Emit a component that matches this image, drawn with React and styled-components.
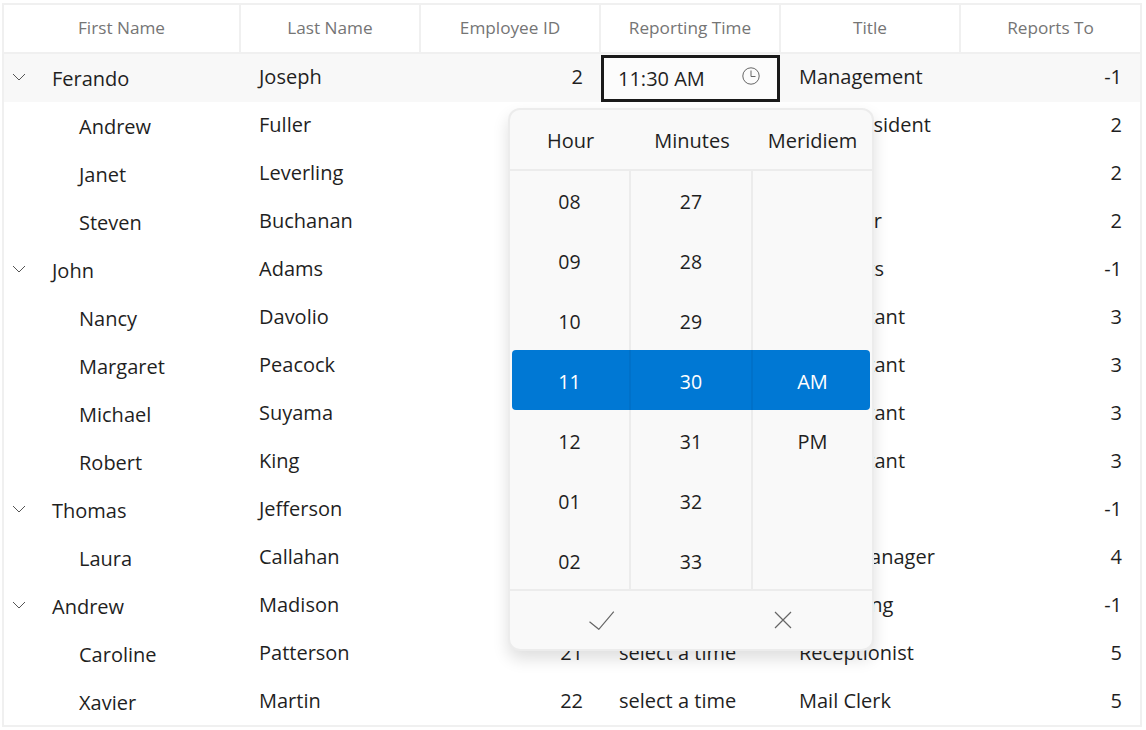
import React from "react";
import styled, { createGlobalStyle } from "styled-components";

const Global = createGlobalStyle`
  html, body {
    margin: 0;
    background: #fff;
    font-family: "Open Sans", "Noto Sans", sans-serif;
    color: #1f1f1f;
  }
`;

const Page = styled.div`
  position: relative;
  width: 1146px;
  height: 730px;
  padding: 3px 2px;
  box-sizing: border-box;
  overflow: hidden;
`;

const Grid = styled.div`
  width: 1140px;
  height: 724px;
  box-sizing: border-box;
  border: 2px solid #f0f0f0;
  overflow: hidden;
`;

const Columns = styled.div`
  display: grid;
  grid-template-columns: 237px repeat(4, 180px) 179px;
`;

const HeaderRow = styled(Columns)`
  height: 47px;
  border-bottom: 2px solid #f0f0f0;
`;

const HeaderCell = styled.div`
  display: flex;
  align-items: center;
  justify-content: center;
  font-size: 17.2px;
  color: #757575;
  border-right: ${(p) => (p.$last ? "none" : "2px solid #f0f0f0")};
  padding-bottom: 3px;
`;

const Row = styled(Columns)`
  height: 48px;
  background: ${(p) => (p.$active ? "#f8f8f8" : "#fff")};
`;

const Cell = styled.div`
  display: flex;
  align-items: center;
  box-sizing: border-box;
  height: 48px;
  font-size: 20px;
  white-space: nowrap;
  padding: 0 18px 4px 18px;
  justify-content: ${(p) => (p.$end ? "flex-end" : "flex-start")};
`;

const NameCell = styled(Cell)`
  padding-bottom: 0;
  padding-left: ${(p) => (p.$parent ? 8 : 75)}px;
`;

const Expander = styled.svg`
  width: 14px;
  height: 8px;
  margin-right: 26px;
  margin-bottom: 2px;
  flex: none;
`;

const EditCell = styled.div`
  display: flex;
  align-items: center;
  justify-content: space-between;
  box-sizing: border-box;
  height: 47px;
  margin-top: 1px;
  width: 179px;
  border: 3px solid #1a1a1a;
  background: #fcfcfc;
  padding: 0 16px 0 14px;
  font-size: 20px;
`;

const ClockIcon = styled.svg`
  width: 20px;
  height: 20px;
  margin-bottom: 5px;
`;

const Popup = styled.div`
  position: absolute;
  left: 508px;
  top: 108px;
  width: 366px;
  height: 543px;
  box-sizing: border-box;
  display: flex;
  flex-direction: column;
  border: 2px solid #ececec;
  border-radius: 12px;
  background: #f9f9f9;
  box-shadow: 0 8px 16px rgba(0, 0, 0, 0.13);
  overflow: hidden;
`;

const PopupHead = styled.div`
  display: grid;
  grid-template-columns: 121px 122px 119px;
  height: 61px;
  box-sizing: border-box;
  border-bottom: 2px solid #ececec;
`;

const HeadLabel = styled.div`
  display: flex;
  align-items: center;
  justify-content: center;
  font-size: 20px;
  padding-top: 1px;
`;

const Wheels = styled.div`
  position: relative;
  display: grid;
  grid-template-columns: 121px 122px 119px;
  height: 418px;
  flex: none;
  overflow: hidden;
`;

const Band = styled.div`
  position: absolute;
  left: 2px;
  right: 2px;
  top: 179px;
  height: 60px;
  border-radius: 4px;
  background: #0078d4;
`;

const Wheel = styled.div`
  position: relative;
  box-sizing: border-box;
  border-right: ${(p) => (p.$last ? "none" : "2px solid rgba(0, 0, 0, 0.05)")};
`;

const WheelItem = styled.div`
  display: flex;
  align-items: center;
  justify-content: center;
  height: 60px;
  font-size: ${(p) => (p.$word ? 20 : 19.5)}px;
  color: ${(p) => (p.$selected ? "#fff" : "#1f1f1f")};
`;

const PopupFoot = styled.div`
  display: grid;
  grid-template-columns: 183px 179px;
  flex: 1;
  border-top: 2px solid #ececec;
`;

const FootButton = styled.div`
  display: flex;
  align-items: center;
  justify-content: center;
`;

const rows = [
  ["Ferando", "Joseph", 2, "11:30 AM", "Management", -1, true],
  ["Andrew", "Fuller", 3, "select a time", "Vice President", 2],
  ["Janet", "Leverling", 4, "select a time", "GM", 2],
  ["Steven", "Buchanan", 18, "select a time", "Designer", 2],
  ["John", "Adams", 5, "select a time", "Accounts", -1, true],
  ["Nancy", "Davolio", 6, "select a time", "Accountant", 3],
  ["Margaret", "Peacock", 7, "select a time", "Accountant", 3],
  ["Michael", "Suyama", 8, "select a time", "Accountant", 3],
  ["Robert", "King", 9, "select a time", "Accountant", 3],
  ["Thomas", "Jefferson", 10, "select a time", "CFO", -1, true],
  ["Laura", "Callahan", 11, "select a time", "Sales Manager", 4],
  ["Andrew", "Madison", 20, "select a time", "Marketing", -1, true],
  ["Caroline", "Patterson", 21, "select a time", "Receptionist", 5],
  ["Xavier", "Martin", 22, "select a time", "Mail Clerk", 5],
];

const wheels = [
  ["08", "09", "10", "11", "12", "01", "02"],
  ["27", "28", "29", "30", "31", "32", "33"],
  ["", "", "", "AM", "PM", "", ""],
];

const headers = ["First Name", "Last Name", "Employee ID", "Reporting Time", "Title", "Reports To"];

function App() {
  return (
    <Page>
      <Global />
      <Grid>
        <HeaderRow>
          {headers.map((h, i) => (
            <HeaderCell key={h} $last={i === 5}>{h}</HeaderCell>
          ))}
        </HeaderRow>
        {rows.map((r, i) => (
          <Row key={i} $active={i === 0}>
            <NameCell $parent={r[6]}>
              {r[6] && (
                <Expander viewBox="0 0 14 8">
                  <path d="M1 1l6 6 6-6" fill="none" stroke="#555" strokeWidth="1" />
                </Expander>
              )}
              {r[0]}
            </NameCell>
            <Cell>{r[1]}</Cell>
            <Cell $end>{r[2]}</Cell>
            {i === 0 ? (
              <EditCell>
                {r[3]}
                <ClockIcon viewBox="0 0 20 20">
                  <circle cx="10" cy="10" r="8.2" fill="none" stroke="#666" strokeWidth="1" />
                  <path d="M10 4.5V10.5H14.5" fill="none" stroke="#666" strokeWidth="1" />
                </ClockIcon>
              </EditCell>
            ) : (
              <Cell>{r[3]}</Cell>
            )}
            <Cell>{r[4]}</Cell>
            <Cell $end>{r[5]}</Cell>
          </Row>
        ))}
      </Grid>

      <Popup>
        <PopupHead>
          <HeadLabel>Hour</HeadLabel>
          <HeadLabel>Minutes</HeadLabel>
          <HeadLabel>Meridiem</HeadLabel>
        </PopupHead>
        <Wheels>
          <Band />
          {wheels.map((items, c) => (
            <Wheel key={c} $last={c === 2}>
              {items.map((t, i) => (
                <WheelItem key={i} $selected={i === 3} $word={c === 2}>{t}</WheelItem>
              ))}
            </Wheel>
          ))}
        </Wheels>
        <PopupFoot>
          <FootButton>
            <svg width="26" height="20" viewBox="0 0 26 20">
              <path d="M0.5 11.7L9.8 19.3 24.8 1.7" fill="none" stroke="#666" strokeWidth="1.2" />
            </svg>
          </FootButton>
          <FootButton>
            <svg width="18" height="18" viewBox="0 0 18 18">
              <path d="M1 1l16 16M17 1L1 17" fill="none" stroke="#666" strokeWidth="1.2" />
            </svg>
          </FootButton>
        </PopupFoot>
      </Popup>
    </Page>
  );
}

export default App;
